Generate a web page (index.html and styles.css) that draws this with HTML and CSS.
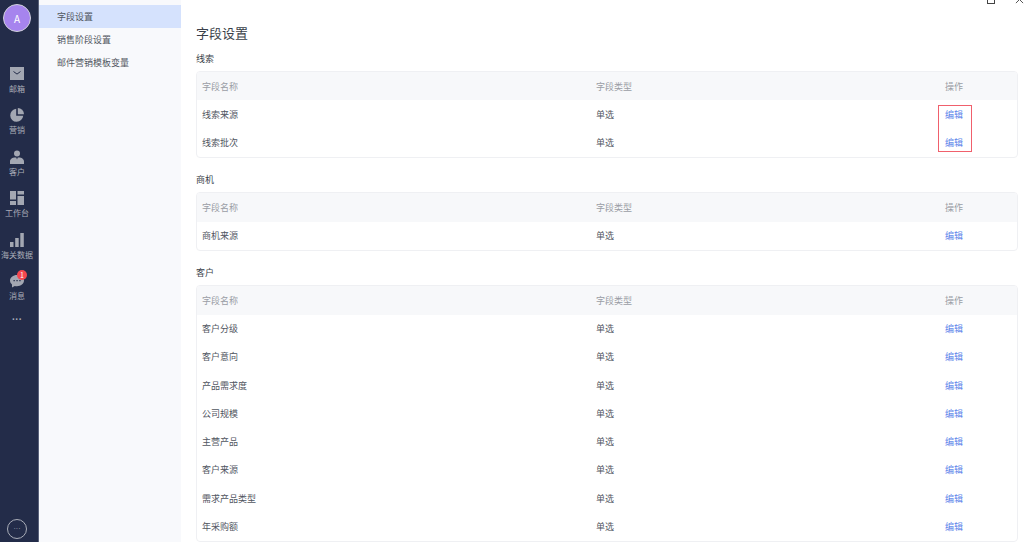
FILE: index.html
```html
<!DOCTYPE html>
<html lang="zh-CN">
<head>
    <meta charset="UTF-8">
    <title>字段设置</title>
    <link rel="stylesheet" href="styles.css">
</head>
<body>
    <div class="app">
        <div class="sidebar">
            <div class="avatar">A</div>
            <div class="side-items">
                <div class="side-item">
                    <svg class="side-icon" viewBox="0 0 14 14"><path fill="#a3a7b2" d="M0 0h14v13H0z"/><path fill="none" stroke="#232c49" stroke-width="1" d="M3.500 4.500l3.500 2.600 3.500-2.600"/></svg>
                    <span>邮箱</span>
                </div>
                <div class="side-item">
                    <svg class="side-icon" viewBox="0 0 14 14"><path fill="#a3a7b2" d="M6.200 .8v7h7A6.500 6.500 0 1 1 6.200 .8z"/><path fill="#a3a7b2" d="M7.800 0a6.300 6.300 0 0 1 6.200 6.200H7.800z"/></svg>
                    <span>营销</span>
                </div>
                <div class="side-item">
                    <svg class="side-icon" viewBox="0 0 14 14"><circle fill="#a3a7b2" cx="7" cy="3.500" r="3"/><path fill="#a3a7b2" d="M0 14v-2.500C0 9 2.500 7.500 5 7.500h1.200L7 9.500l.8-2H9c2.500 0 5 1.500 5 4V14z"/></svg>
                    <span>客户</span>
                </div>
                <div class="side-item">
                    <svg class="side-icon" viewBox="0 0 14 14"><path fill="#a3a7b2" d="M0 0h6v8.500H0zM7.500 0H14v3.500H7.500zM7.500 5H14v9H7.500zM0 10h6v4H0z"/></svg>
                    <span>工作台</span>
                </div>
                <div class="side-item">
                    <svg class="side-icon" viewBox="0 0 14 14"><path fill="#a3a7b2" d="M0 9h3.500v5H0zM5.200 5h3.500v9H5.200zM10.300 0h3.500v14h-3.500z"/></svg>
                    <span>海关数据</span>
                </div>
                <div class="side-item">
                    <div class="msg-wrap">
                        <svg class="side-icon" viewBox="0 0 14 14"><path fill="#a3a7b2" d="M7 1c3.900 0 7 2.500 7 5.600s-3.100 5.600-7 5.600c-.8 0-1.500-.1-2.200-.3L2 13.500v-3C.7 9.500 0 8.100 0 6.600 0 3.500 3.100 1 7 1z"/><path fill="#232c49" d="M3.500 6h1.300v1.300H3.500zM6.400 6h1.300v1.300H6.400zM9.300 6h1.300v1.300H9.300z"/></svg>
                        <span class="badge">1</span>
                    </div>
                    <span>消息</span>
                </div>
            </div>
            <div class="side-more">···</div>
            <div class="side-circle">···</div>
        </div>

        <div class="subnav">
            <div class="subnav-item active">字段设置</div>
            <div class="subnav-item">销售阶段设置</div>
            <div class="subnav-item">邮件营销模板变量</div>
        </div>

        <div class="main">
            <div class="win-btns">
                <span class="win-max"></span>
                <svg class="win-close" viewBox="0 0 10 10"><path fill="none" stroke="#444" stroke-width="1" d="M1 1l8 8M9 1L1 9"/></svg>
            </div>
            <h1 class="page-title">字段设置</h1>

            <div class="section-title">线索</div>
            <div class="table">
                <div class="row head"><span>字段名称</span><span>字段类型</span><span>操作</span></div>
                <div class="row"><span>线索来源</span><span>单选</span><a>编辑</a></div>
                <div class="row"><span>线索批次</span><span>单选</span><a>编辑</a></div>
                <div class="mark"></div>
            </div>

            <div class="section-title">商机</div>
            <div class="table">
                <div class="row head"><span>字段名称</span><span>字段类型</span><span>操作</span></div>
                <div class="row"><span>商机来源</span><span>单选</span><a>编辑</a></div>
            </div>

            <div class="section-title">客户</div>
            <div class="table">
                <div class="row head"><span>字段名称</span><span>字段类型</span><span>操作</span></div>
                <div class="row"><span>客户分级</span><span>单选</span><a>编辑</a></div>
                <div class="row"><span>客户意向</span><span>单选</span><a>编辑</a></div>
                <div class="row"><span>产品需求度</span><span>单选</span><a>编辑</a></div>
                <div class="row"><span>公司规模</span><span>单选</span><a>编辑</a></div>
                <div class="row"><span>主营产品</span><span>单选</span><a>编辑</a></div>
                <div class="row"><span>客户来源</span><span>单选</span><a>编辑</a></div>
                <div class="row"><span>需求产品类型</span><span>单选</span><a>编辑</a></div>
                <div class="row"><span>年采购额</span><span>单选</span><a>编辑</a></div>
            </div>
        </div>
    </div>
</body>
</html>
```

FILE: styles.css
```css
* {
    margin: 0;
    padding: 0;
    box-sizing: border-box;
}

html, body {
    height: 100%;
    overflow: hidden;
}

body {
    font-family: "Noto Sans CJK SC", "Noto Sans", sans-serif;
    background: white;
}

.app {
    display: flex;
    height: 542px;
}

.sidebar {
    width: 39px;
    flex-shrink: 0;
    background: #232c49;
    border-right: 1px solid #59617a;
    padding-right: 4px;
    display: flex;
    flex-direction: column;
    align-items: center;
    color: #a9adb8;
    font-size: 8px;
}

.avatar {
    width: 28px;
    height: 28px;
    margin-top: 4px;
    border-radius: 50%;
    background: #a684ee;
    border: 1px solid #cfd0da;
    color: white;
    font-size: 10px;
    display: flex;
    align-items: center;
    justify-content: center;
}

.side-items {
    margin-top: 35px;
    display: flex;
    flex-direction: column;
    gap: 14px;
}

.side-item {
    height: 27.400px;
    display: flex;
    flex-direction: column;
    align-items: center;
    gap: 2px;
    line-height: 11px;
    white-space: nowrap;
}

.side-icon {
    display: block;
    width: 14px;
    height: 14px;
}

.msg-wrap {
    position: relative;
}

.badge {
    position: absolute;
    top: -4px;
    left: 7px;
    width: 10px;
    height: 10px;
    border-radius: 50%;
    background: #f5474f;
    color: white;
    font-size: 7px;
    line-height: 10px;
    text-align: center;
}

.side-more {
    margin-top: 13px;
    font-family: "Liberation Sans", sans-serif;
    font-size: 10px;
    line-height: 12px;
    font-weight: bold;
}

.side-circle {
    margin-top: auto;
    margin-bottom: 3px;
    width: 20px;
    height: 20px;
    border-radius: 50%;
    border: 1px solid #a9adb8;
    font-family: "Liberation Sans", sans-serif;
    font-size: 7px;
    line-height: 18px;
    text-align: center;
}

.subnav {
    width: 142px;
    flex-shrink: 0;
    background: #f8f9fc;
    padding-top: 5px;
    font-size: 9px;
    color: #51565f;
}

.subnav-item {
    height: 23px;
    line-height: 23px;
    padding-left: 18px;
}

.active {
    background: #d5e2fd;
}

.main {
    position: relative;
    flex: 1;
    padding: 24px 6px 0 15px;
    overflow: hidden;
}

.win-btns {
    position: absolute;
    top: -5px;
    right: 0;
    display: flex;
    align-items: center;
    gap: 20px;
}

.win-max {
    width: 8px;
    height: 9px;
    border: 1px solid #444;
}

.win-close {
    width: 9px;
    height: 9px;
}

.page-title {
    font-size: 13px;
    font-weight: normal;
    line-height: 18px;
    color: #3a3f4a;
}

.section-title {
    font-size: 9px;
    line-height: 12px;
    color: #3a3f4a;
    margin-top: 16px;
    margin-bottom: 6.500px;
}

.page-title + .section-title {
    margin-top: 10.500px;
}

.table {
    position: relative;
    border: 1px solid #eff0f3;
    border-radius: 4px;
    overflow: hidden;
}

.row {
    display: grid;
    grid-template-columns: 394px 349px 1fr;
    height: 28.250px;
    align-items: center;
    padding-left: 5px;
    font-size: 9px;
    color: #51565f;
}

.row a {
    color: #5b84ea;
}

.head {
    background: #f7f8fa;
    color: #9a9da5;
}

.mark {
    position: absolute;
    top: 33px;
    left: 741px;
    width: 34px;
    height: 47px;
    border: 1px solid #f0606c;
}
```
